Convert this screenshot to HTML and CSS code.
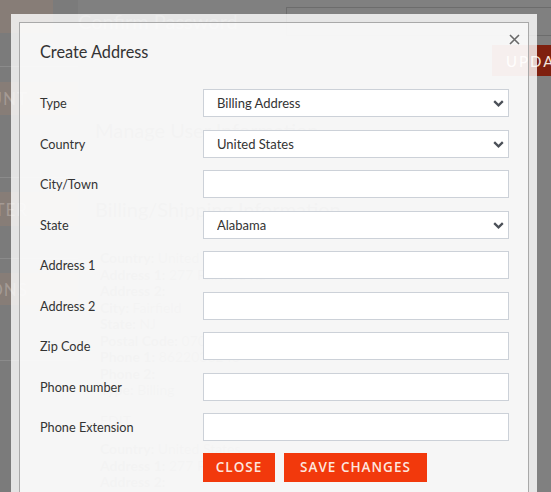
FILE: index.html
```html
<!DOCTYPE html>
<html>
<head>
<meta charset="utf-8">
<title>Create Address</title>
<link rel="stylesheet" href="styles.css">
</head>
<body>
<div class="page">
  <aside class="sidebar">
    <div class="side-top"></div>
    <div class="side-line l1"></div>
    <div class="side-item i1">MY ACCOUNT</div>
    <div class="side-line l2"></div>
    <div class="side-item i2">HELP CENTER</div>
    <div class="side-line l3"></div>
    <div class="side-item i3">OPTIONS</div>
    <div class="side-line l4"></div>
  </aside>
  <main class="main">
    <div class="row1">
      <div class="cp-label">Confirm Password</div>
      <div class="cp-input"></div>
    </div>
    <div class="update">UPDATE</div>
    <div class="panel p1">Manage User Information</div>
    <div class="panel p2">Billing/Shipping Information</div>
    <div class="addr">
      <div><b>Country:</b> United States</div>
      <div><b>Address 1:</b> 277 Fairfield Rd</div>
      <div><b>Address 2:</b></div>
      <div><b>City:</b> Fairfield</div>
      <div><b>State:</b> NJ</div>
      <div><b>Postal Code:</b> 07004</div>
      <div><b>Phone 1:</b> 8622038246</div>
      <div><b>Phone 2:</b></div>
      <div><b>Type:</b> Billing</div>
      <div class="edit">EDIT</div>
      <div class="second"><b>Country:</b> United States</div>
      <div><b>Address 1:</b> 277 Fairfield Rd</div>
      <div><b>Address 2:</b></div>
    </div>
  </main>
</div>

<div class="frame">
  <div class="modal">
    <div class="modal-header">
      <h2 class="title">Create Address</h2>
      <span class="close-x"><svg width="11" height="11" viewBox="0 0 11 11"><path d="M1 1L10 10M10 1L1 10" stroke="#6a6a6a" stroke-width="1.6" fill="none"/></svg></span>
    </div>
    <div class="form">
      <label class="lbl">Type</label>
      <div class="sel"><select><option>Billing Address</option></select><svg class="chev" width="11" height="7" viewBox="0 0 11 7"><path d="M1.2 1.2L5.5 5.3L9.8 1.2" stroke="#4b5058" stroke-width="2.3" fill="none"/></svg></div>
      <label class="lbl">Country</label>
      <div class="sel"><select><option>United States</option></select><svg class="chev" width="11" height="7" viewBox="0 0 11 7"><path d="M1.2 1.2L5.5 5.3L9.8 1.2" stroke="#4b5058" stroke-width="2.3" fill="none"/></svg></div>
      <label class="lbl">City/Town</label>
      <input class="inp" type="text">
      <label class="lbl">State</label>
      <div class="sel"><select><option>Alabama</option></select><svg class="chev" width="11" height="7" viewBox="0 0 11 7"><path d="M1.2 1.2L5.5 5.3L9.8 1.2" stroke="#4b5058" stroke-width="2.3" fill="none"/></svg></div>
      <label class="lbl">Address 1</label>
      <input class="inp" type="text">
      <label class="lbl">Address 2</label>
      <input class="inp" type="text">
      <label class="lbl">Zip Code</label>
      <input class="inp" type="text">
      <label class="lbl">Phone number</label>
      <input class="inp" type="text">
      <label class="lbl">Phone Extension</label>
      <input class="inp" type="text">
      <div class="buttons">
        <button class="btn btn-close">CLOSE</button>
        <button class="btn btn-save">SAVE CHANGES</button>
      </div>
    </div>
  </div>
</div>
</body>
</html>
```
FILE: styles.css
```css
* { box-sizing: border-box; }
html, body { margin: 0; height: 100%; overflow: hidden; }
body {
  background: #808080;
  font-family: Lato, "Noto Sans", sans-serif;
}

/* background page (dimmed) */
.page {
  display: grid;
  grid-template-columns: 78px 1fr;
  height: 492px;
}
.sidebar { background: #7b7b7b; }
.side-top { width: 53px; height: 33px; background: #877d77; }
.side-line { height: 1px; background: #8b8b8b; }
.l1 { margin-top: 33px; }
.l2 { margin-top: 62px; }
.l3 { margin-top: 32px; }
.l4 { margin-top: 55px; }
.side-item {
  height: 33px;
  background: #877d77;
  color: #a49a94;
  font-size: 17px;
  letter-spacing: 1px;
  display: flex;
  align-items: center;
  justify-content: flex-end;
  padding-right: 50px;
  white-space: nowrap;
  overflow: hidden;
}
.i1 { margin-top: 15px; }
.i2 { margin-top: 14px; height: 34px; }
.i3 { margin-top: 14px; height: 32px; }

.main { overflow: hidden; }
.row1 { display: flex; height: 45px; }
.cp-label { font-size: 20px; color: #9c9c9c; margin-top: 9px; white-space: nowrap; line-height: 24px; }
.cp-input {
  margin-left: auto;
  margin-top: 7px;
  width: 265px;
  height: 29px;
  border: 1px solid #6c6c6c;
  border-right: none;
}
.update {
  margin-left: 414px;
  width: 100px;
  height: 31px;
  background: #7f200f;
  color: #f3e4de;
  font-size: 15px;
  letter-spacing: 2px;
  display: flex;
  align-items: center;
  padding-left: 14px;
}
.panel {
  display: flex;
  align-items: center;
  padding-left: 17px;
  font-size: 20px;
  color: #555;
  white-space: nowrap;
}
.p1 { margin-top: 32px; height: 44px; }
.p2 { margin-top: 36px; height: 42px; }
.addr {
  margin-top: 20px;
  padding-left: 22px;
  font-size: 14px;
  line-height: 16.5px;
  color: #5e5e5e;
  white-space: nowrap;
}
.addr b { font-weight: 700; color: #585858; }
.edit { margin-top: 14.5px; }
.second { margin-top: 11.5px; }

/* modal */
.frame {
  position: absolute;
  left: 11px;
  top: 14px;
  width: 526px;
  height: 492px;
  border: 8px solid rgba(255, 255, 255, 0.8);
}
.modal {
  height: 100%;
  border: 1px solid #a9a9a9;
  background: rgba(255, 255, 255, 0.93);
  padding: 17px 19px 0 20px;
}
.modal-header {
  display: flex;
  align-items: flex-start;
  justify-content: space-between;
}
.title {
  margin: 0;
  font-size: 16.3px;
  font-weight: 400;
  line-height: 24px;
  color: #333;
}
.close-x {
  display: block;
  width: 11px;
  height: 11px;
  margin-top: -6px;
  margin-right: -11px;
}
.close-x svg { display: block; }

.form {
  margin-top: 25px;
  display: grid;
  grid-template-columns: 163px 306px;
  grid-auto-rows: 28px;
  row-gap: 12.5px;
  align-items: center;
}
.lbl {
  font-size: 12.7px;
  color: #333;
}
.inp, .sel select {
  width: 306px;
  height: 28px;
  border: 1px solid #ccd1d8;
  background: #fff;
  margin: 0;
  border-radius: 0;
  outline: none;
}
.sel { position: relative; height: 28px; }
.sel select {
  display: block;
  -webkit-appearance: none;
  appearance: none;
  font-family: Lato, "Noto Sans", sans-serif;
  font-size: 13px;
  color: #333;
  padding: 0 0 0 13px;
}
.chev {
  position: absolute;
  right: 5px;
  top: 11px;
}
.buttons {
  grid-column: 2;
  display: flex;
  gap: 9px;
  height: 29px;
  margin-top: -0.5px;
}
.btn {
  height: 29px;
  border: none;
  border-radius: 0;
  background: #f2390c;
  color: #fde6df;
  font-family: "Open Sans", "Noto Sans", sans-serif;
  font-size: 13.5px;
  font-weight: 600;
  letter-spacing: 1px;
  padding: 0;
}
.btn-close { width: 72px; }
.btn-save { width: 143px; }
```
